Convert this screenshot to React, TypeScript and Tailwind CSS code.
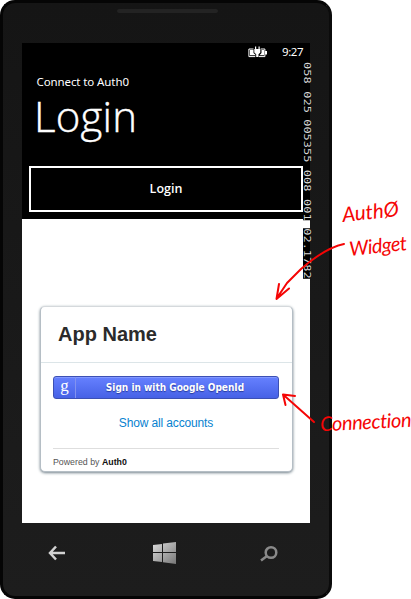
import React from "react";

const counters = ["058", "025", "005355", "008", "001", "02.1782"];

function BatteryIcon() {
  return (
    <svg className="mt-[3px] h-3 w-5" viewBox="0 0 20 12" fill="none">
      <path d="M5.5 3H.9v7.6h6.4M12.7 3h4.2v7.6h-6" stroke="#fff" />
      <path d="M2 4h3.5v3L8 9.3H2zM13.5 4H16v5.3h-4.5L13.5 7z" fill="#fff" />
      <path d="M17 5h2v3.5h-2z" fill="#fff" />
      <path d="M6.3 3h6v3.4L10.5 8.2V11H8.2V8.2L6.3 6.4zM7 .5h1.2v3H7zM10.5.5h1.2v3h-1.2z" fill="#fff" />
    </svg>
  );
}

function Screen() {
  return (
    <div className="flex h-[480px] w-[288px] flex-col bg-white">
      <header className="h-[176px] bg-black text-white">
        <div className="flex h-[18px] justify-end pr-[7px] font-['Noto_Sans',sans-serif]">
          <BatteryIcon />
          <span className="ml-[14px] w-[21px] text-[11.5px] leading-[18px] tracking-[-0.4px]">9:27</span>
        </div>
        <div className="ml-[14.5px] mt-[14px] h-[14px] whitespace-nowrap font-['Noto_Sans',sans-serif] text-[11.5px] leading-[14px] tracking-[-0.1px]">
          Connect to Auth0
        </div>
        <h1 className="ml-[12px] mt-[6px] h-[56px] font-['Open_Sans',sans-serif] text-[42px] font-light leading-[42px] tracking-[0.2px] [-webkit-text-stroke:0.4px_white]">
          Login
        </h1>
        <button className="ml-[7px] mt-[15px] block h-[46px] w-[274px] border-2 border-white font-['Open_Sans',sans-serif] text-[12.5px] font-semibold leading-[40px]">
          Login
        </button>
      </header>
      <section className="ml-[17.5px] mt-[87px] h-[166px] w-[253px] rounded-[5px] border border-[#b5bec5] border-t-[#d5d9dc] bg-white font-['Liberation_Sans',sans-serif] shadow-[0_1px_3px_#71808a]">
        <h2 className="h-[56px] border-b border-[#dce5e8] pl-[17.5px] text-[20px] font-bold leading-[55px] text-[#2b2b2b]">App Name</h2>
        <div className="mx-[12.5px] flex flex-col pt-[13px]">
          <button className="flex h-[23px] w-[226px] rounded-[3px] border border-[#3c50b4] bg-gradient-to-b from-[#6681ff] to-[#4661e6] text-white shadow-[inset_0_1px_0_#8298ff]">
            <span className="w-[22px] border-r border-[#8292ef] text-center font-['Liberation_Serif',serif] text-[17px] leading-[17px]">g</span>
            <span className="flex-1 whitespace-nowrap pr-[4px] text-center font-['DejaVu_Sans_Condensed','DejaVu_Sans',sans-serif] text-[10px] font-bold leading-[21px] [text-shadow:0_1px_1px_#263a9e]">
              Sign in with Google OpenId
            </span>
          </button>
          <a className="mt-[14px] h-[20px] whitespace-nowrap text-center text-[12px] leading-[20px] tracking-[-0.14px] text-[#0782d0]">Show all accounts</a>
          <div className="mt-[15px] w-[226px] border-t border-[#dedede] pt-[7px] text-[8.8px] leading-[12px] text-[#555]">
            Powered by <b className="text-[#111]">Auth0</b>
          </div>
        </div>
      </section>
    </div>
  );
}

function FrameCounters() {
  return (
    <div className="absolute left-[303px] top-[62px] flex origin-top scale-y-[1.33] gap-[5.42px] font-['DejaVu_Sans_Mono',monospace] text-[9px] leading-[7px] text-[#d8d8d8] [writing-mode:vertical-rl]">
      {counters.map((value) => (
        <span key={value} className="bg-black">{value}</span>
      ))}
    </div>
  );
}

function Annotations() {
  return (
    <>
      <svg className="absolute left-0 top-0 h-[599px] w-[411px]" viewBox="0 0 411 599" fill="none" stroke="#f50505" strokeWidth="2" strokeLinecap="round" strokeLinejoin="round">
        <path d="M344 244Q325 248 301 269L287 283L277 298M279 284L276.5 299L289 288.5" />
        <path d="M314 422L283 394.500M285.500 405L283 394.500L295 396" />
      </svg>
      <span className="absolute left-[342px] top-[197px] -rotate-6 font-['Lato',sans-serif] text-[20.5px] italic leading-[28px] text-[#f50505]">AuthØ</span>
      <span className="absolute left-[349px] top-[231px] -rotate-6 font-['Lato',sans-serif] text-[20px] italic leading-[28px] tracking-[-0.5px] text-[#f50505]">Widget</span>
      <span className="absolute left-[320px] top-[407px] -rotate-3 font-['Lato',sans-serif] text-[20px] italic leading-[28px] tracking-[-0.4px] text-[#f50505]">Connection</span>
    </>
  );
}

export default function App() {
  return (
    <div className="relative h-[599px] w-[411px] overflow-hidden bg-white">
      <main className="flex h-[599px] w-[332px] flex-col rounded-[15px] border-[3px] border-[#050505] border-r-[#0b0b0b] bg-gradient-to-b from-[#151515] to-[#1d1d1d]">
        <div className="ml-[114px] mt-[6px] h-[4px] w-[101px] shrink-0 rounded-full bg-[#232323]" />
        <div className="ml-[19px] mt-[30px]">
          <Screen />
        </div>
        <nav className="ml-[19px] flex h-[60px] w-[288px] items-center justify-between pl-[26px] pr-[32px]">
          <svg className="h-[16px] w-[18px]" viewBox="0 0 18 16" fill="none" stroke="#d2d2d2" strokeWidth="2.5">
            <path d="M2 8H17M8 1.500L2 8L8 14.500" />
          </svg>
          <svg className="ml-[3px] h-[22px] w-[23px]" viewBox="0 0 23 22">
            <defs>
              <linearGradient id="logo" x2="1" y2="1">
                <stop stopColor="#ddd" />
                <stop offset="1" stopColor="#777" />
              </linearGradient>
            </defs>
            <path d="M0 3L9 2V10H0zM10 1.5L23 0V10H10zM0 11H9V20L0 19zM10 11H23V22L10 20.3z" fill="url(#logo)" />
          </svg>
          <svg className="h-[17px] w-[18px]" viewBox="0 0 18 17" fill="none" stroke="#8a8a8a" strokeWidth="2.5">
            <circle cx="11" cy="7.5" r="5.3" />
            <path d="M7 11L1 15.500" />
          </svg>
        </nav>
      </main>
      <FrameCounters />
      <Annotations />
    </div>
  );
}
